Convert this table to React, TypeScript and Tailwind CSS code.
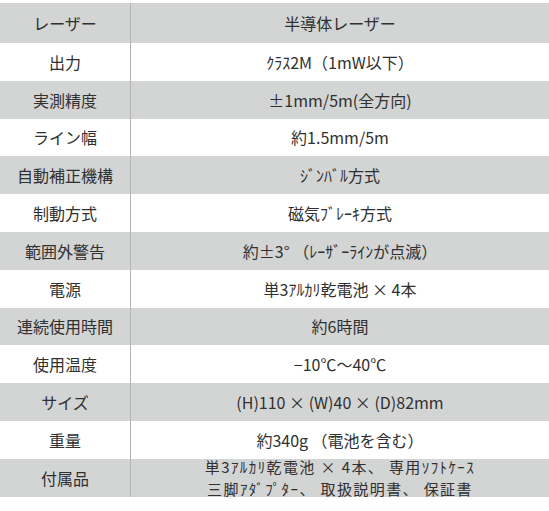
const rows: [string, string[]][] = [
  ["レーザー", ["半導体レーザー"]],
  ["出力", ["ｸﾗｽ2M（1mW以下）"]],
  ["実測精度", ["±1mm/5m(全方向)"]],
  ["ライン幅", ["約1.5mm/5m"]],
  ["自動補正機構", ["ｼﾞﾝﾊﾞﾙ方式"]],
  ["制動方式", ["磁気ﾌﾞﾚｰｷ方式"]],
  ["範囲外警告", ["約±3° （ﾚｰｻﾞｰﾗｲﾝが点滅）"]],
  ["電源", ["単3ｱﾙｶﾘ乾電池 × 4本"]],
  ["連続使用時間", ["約6時間"]],
  ["使用温度", ["−10℃～40℃"]],
  ["サイズ", ["(H)110 × (W)40 × (D)82mm"]],
  ["重量", ["約340g （電池を含む）"]],
  ["付属品", ["単3ｱﾙｶﾘ乾電池 × 4本、 専用ｿﾌﾄｹｰｽ", "三脚ｱﾀﾞﾌﾟﾀｰ、 取扱説明書、 保証書"]],
];

export default function App() {
  return (
    <main
      className="w-[549px] h-[511px] bg-white pt-[3px] text-[#303030] text-[16px]"
      style={{ fontFamily: '"Noto Sans CJK JP", "Noto Sans", sans-serif' }}
    >
      {rows.map(([label, value], i) => (
        <div
          key={label}
          className={
            (i % 2 === 0 ? "bg-[#d3d4d4] " : "bg-white ") +
            (i === 0 ? "h-[40px] " : "h-[37.8px] ") +
            "flex"
          }
        >
          <div className="w-[131px] flex items-center justify-center border-r border-[#b4b4b4]">
            {label}
          </div>
          <div className="flex-1 flex items-center justify-center">
            {value.length > 1 ? (
              <p className="text-center text-[15px] leading-[22px] tracking-[1.4px]">
                {value.map((line, j) => (
                  <span key={line}>
                    {j > 0 && <br />}
                    {line}
                  </span>
                ))}
              </p>
            ) : (
              <p>{value[0]}</p>
            )}
          </div>
        </div>
      ))}
    </main>
  );
}
